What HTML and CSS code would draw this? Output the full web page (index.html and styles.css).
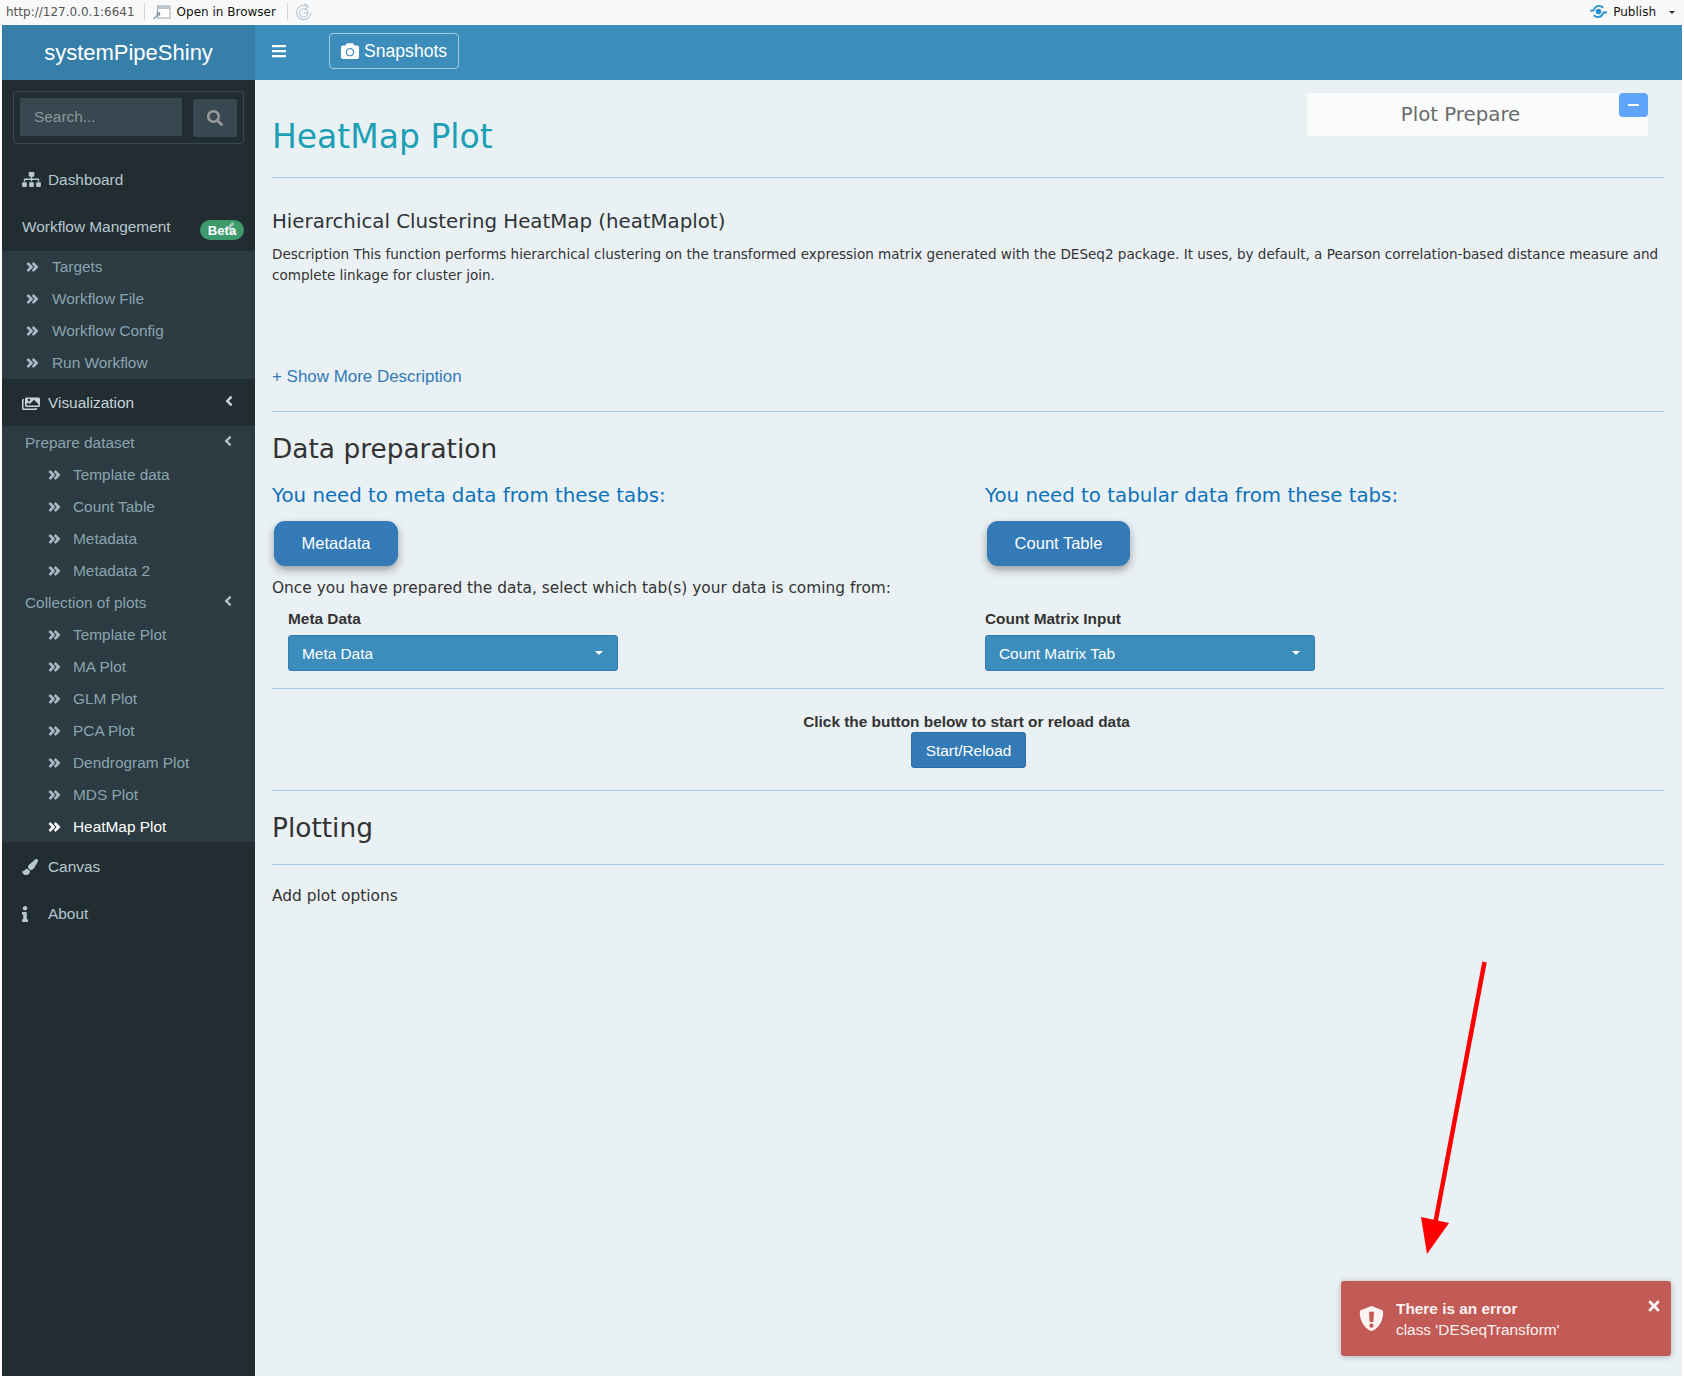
FILE: index.html
```html
<!DOCTYPE html>
<html lang="en">
<head>
<meta charset="utf-8">
<title>systemPipeShiny</title>
<link rel="stylesheet" href="styles.css">
</head>
<body>
<svg class="defs" width="0" height="0" aria-hidden="true">
  <symbol id="i-dbl" viewBox="0 0 448 512"><path d="M224.3 273l-136 136c-9.4 9.4-24.6 9.4-33.9 0l-22.6-22.6c-9.4-9.4-9.4-24.6 0-33.9l96.4-96.4-96.4-96.4c-9.4-9.4-9.4-24.6 0-33.9L54.3 103c9.4-9.4 24.6-9.4 33.9 0l136 136c9.5 9.4 9.5 24.6.1 34zm192-34l-136-136c-9.4-9.4-24.6-9.4-33.9 0l-22.6 22.6c-9.4 9.4-9.4 24.6 0 33.9l96.4 96.4-96.4 96.4c-9.4 9.4-9.4 24.6 0 33.9l22.6 22.6c9.4 9.4 24.6 9.4 33.9 0l136-136c9.4-9.2 9.4-24.4 0-33.8z"/></symbol>
  <symbol id="i-left" viewBox="0 0 256 512"><path d="M31.7 239l136-136c9.4-9.4 24.6-9.4 33.9 0l22.6 22.6c9.4 9.4 9.4 24.6 0 33.9L127.9 256l96.4 96.4c9.4 9.4 9.4 24.6 0 33.9L201.7 409c-9.4 9.4-24.6 9.4-33.9 0l-136-136c-9.5-9.4-9.5-24.6-.1-34z"/></symbol>
  <symbol id="i-search" viewBox="0 0 512 512"><path d="M505 442.7L405.3 343c-4.5-4.5-10.6-7-17-7H372c27.6-35.3 44-79.7 44-128C416 93.1 322.9 0 208 0S0 93.1 0 208s93.1 208 208 208c48.3 0 92.7-16.4 128-44v16.3c0 6.4 2.5 12.5 7 17l99.7 99.7c9.4 9.4 24.6 9.4 33.9 0l28.3-28.3c9.4-9.4 9.4-24.6.1-34zM208 336c-70.7 0-128-57.2-128-128 0-70.7 57.2-128 128-128 70.7 0 128 57.2 128 128 0 70.7-57.2 128-128 128z"/></symbol>
  <symbol id="i-bars" viewBox="0 0 448 512"><path d="M16 132h416c8.837 0 16-7.163 16-16V76c0-8.837-7.163-16-16-16H16C7.163 60 0 67.163 0 76v40c0 8.837 7.163 16 16 16zm0 160h416c8.837 0 16-7.163 16-16v-40c0-8.837-7.163-16-16-16H16c-8.837 0-16 7.163-16 16v40c0 8.837 7.163 16 16 16zm0 160h416c8.837 0 16-7.163 16-16v-40c0-8.837-7.163-16-16-16H16c-8.837 0-16 7.163-16 16v40c0 8.837 7.163 16 16 16z"/></symbol>
  <symbol id="i-camera" viewBox="0 0 512 512"><path d="M512 144v288c0 26.5-21.5 48-48 48H48c-26.5 0-48-21.5-48-48V144c0-26.5 21.5-48 48-48h88l12.3-32.9c7-18.7 24.9-31.1 44.9-31.1h125.5c20 0 37.9 12.4 44.9 31.1L376 96h88c26.5 0 48 21.5 48 48zM376 288c0-66.2-53.8-120-120-120s-120 53.8-120 120 53.8 120 120 120 120-53.8 120-120zm-32 0c0 48.5-39.5 88-88 88s-88-39.5-88-88 39.5-88 88-88 88 39.5 88 88z"/></symbol>
  <symbol id="i-times" viewBox="0 0 352 512"><path d="M242.72 256l100.07-100.07c12.28-12.28 12.28-32.19 0-44.48l-22.24-22.24c-12.28-12.28-32.19-12.28-44.48 0L176 189.28 75.93 89.21c-12.28-12.28-32.19-12.28-44.48 0L9.21 111.45c-12.28 12.28-12.28 32.19 0 44.48L109.28 256 9.21 356.07c-12.28 12.28-12.28 32.19 0 44.48l22.24 22.24c12.28 12.28 32.2 12.28 44.48 0L176 322.72l100.07 100.07c12.28 12.28 32.2 12.28 44.48 0l22.24-22.24c12.28-12.28 12.28-32.19 0-44.48L242.72 256z"/></symbol>
  <symbol id="i-brush" viewBox="0 0 512 512"><path d="M167.02 309.34c-40.12 2.58-76.53 17.86-97.19 72.3-2.35 6.21-8 9.98-14.59 9.98-11.11 0-45.46-27.67-55.25-34.35C0 439.62 37.93 512 128 512c75.86 0 128-43.77 128-120.19 0-3.11-.65-6.08-.97-9.13l-88.01-73.34zM457.89 0c-15.16 0-29.37 6.71-40.21 16.45C213.27 199.05 192 203.34 192 257.09c0 13.7 3.25 26.76 8.73 38.7l63.82 53.18c7.21 1.8 14.64 3.03 22.39 3.03 62.11 0 98.11-45.47 211.16-256.46 7.38-14.35 13.9-29.85 13.9-45.99C512 20.64 486 0 457.89 0z"/></symbol>
  <symbol id="i-info" viewBox="0 0 192 512"><path d="M20 424.229h20V279.771H20c-11.046 0-20-8.954-20-20V212c0-11.046 8.954-20 20-20h112c11.046 0 20 8.954 20 20v212.229h20c11.046 0 20 8.954 20 20V492c0 11.046-8.954 20-20 20H20c-11.046 0-20-8.954-20-20v-47.771c0-11.046 8.954-20 20-20zM96 0C56.235 0 24 32.235 24 72s32.235 72 72 72 72-32.235 72-72S135.764 0 96 0z"/></symbol>
  <symbol id="i-sitemap" viewBox="0 0 640 512"><path d="M128 352H32c-17.7 0-32 14.3-32 32v96c0 17.7 14.3 32 32 32h96c17.7 0 32-14.300 32-32v-96c0-17.700-14.300-32-32-32zm-24-80h192v48h48v-48h192v48h48v-57.600c0-21.200-17.200-38.400-38.400-38.400H344v-64h40c17.700 0 32-14.300 32-32V32c0-17.700-14.300-32-32-32H256c-17.700 0-32 14.300-32 32v96c0 17.700 14.300 32 32 32h40v64H94.400C73.200 224 56 241.200 56 262.400V320h48v-48zm264 80h-96c-17.700 0-32 14.300-32 32v96c0 17.700 14.300 32 32 32h96c17.700 0 32-14.300 32-32v-96c0-17.700-14.300-32-32-32zm240 0h-96c-17.700 0-32 14.300-32 32v96c0 17.700 14.300 32 32 32h96c17.700 0 32-14.300 32-32v-96c0-17.700-14.300-32-32-32z"/></symbol>
  <symbol id="i-images" viewBox="0 0 576 512"><path d="M480 416v16c0 26.500-21.500 48-48 48H48c-26.500 0-48-21.500-48-48V176c0-26.500 21.500-48 48-48h16v48H54c-3.300 0-6 2.700-6 6v244c0 3.300 2.700 6 6 6h372c3.300 0 6-2.700 6-6v-10h48zm48-336H144c-26.500 0-48 21.500-48 48v208c0 26.500 21.500 48 48 48h384c26.500 0 48-21.500 48-48V128c0-26.500-21.500-48-48-48zM222 120c22.100 0 40 17.900 40 40s-17.900 40-40 40-40-17.900-40-40 17.900-40 40-40zm306 218H144v-40l56-56 48 48 136-136 144 144v40z"/></symbol>
  <symbol id="i-shield" viewBox="0 0 512 512"><path fill-rule="evenodd" d="M466 84L274 4a48 48 0 0 0-37 0L46 84C28 91 16 109 16 128c0 198 114 336 221 380 12 5 25 5 37 0C360 473 496 349 496 128c0-19-12-37-30-44zM205 120h102l-12 210h-78zM256 358a44 44 0 1 1 0 88 44 44 0 0 1 0-88z"/></symbol>
</svg>

<div class="window">
  <div class="toolbar">
    <span class="tb-url">http://127.0.0.1:6641</span>
    <span class="tb-sep"></span>
    <svg class="tb-open" viewBox="0 0 18 16"><rect x="5" y="2" width="12.500" height="12" fill="#fff" stroke="#9aa7b4"/><rect x="5" y="2" width="12.500" height="3" fill="#b9c6d2"/><path d="M1 15l6-6M4 9h3v3" fill="none" stroke="#8a97a3" stroke-width="1.300"/></svg>
    <span class="tb-text">Open in Browser</span>
    <span class="tb-sep tb-sep-2"></span>
    <svg class="tb-reload" viewBox="0 0 18 18"><path d="M16 10A7.200 7.200 0 1 1 12.500 3.200M9.500 .8l3.600 2.500-2.800 3.400M13 10H8.500" fill="none" stroke="#b7c5d3" stroke-width="1.100"/><circle cx="8.800" cy="10" r="4.200" fill="none" stroke="#b7c5d3" stroke-width="1.100"/></svg>
    <span class="tb-spacer"></span>
    <svg class="tb-pub" viewBox="0 0 20 16"><path d="M1 7h3.500C6 3.500 8 2 10.500 2c2 0 3.500 1 4.500 2M19 9h-3.500c-1.500 3.500-3.500 5-6 5-2 0-3.500-1-4.500-2" fill="none" stroke="#2a92d0" stroke-width="2"/><circle cx="10" cy="8" r="3" fill="#2a92d0"/></svg>
    <span class="tb-text">Publish</span>
    <span class="tb-caret"></span>
  </div>

  <header class="topbar">
    <div class="logo">systemPipeShiny</div>
    <div class="navbar">
      <svg class="ic bars"><use href="#i-bars"/></svg>
      <button class="snap"><svg class="ic cam"><use href="#i-camera"/></svg><span class="snap-label">Snapshots</span></button>
    </div>
  </header>

  <div class="body">
    <aside class="sidebar">
      <form class="search">
        <input class="search-in" type="text" placeholder="Search...">
        <button class="search-btn" type="button"><svg class="ic"><use href="#i-search"/></svg></button>
      </form>

      <a class="top-item first"><svg class="ic ic-site"><use href="#i-sitemap"/></svg><span>Dashboard</span></a>
      <a class="top-item plain"><span>Workflow Mangement</span><b class="beta">Beta</b><svg class="ic chev chev-beta"><use href="#i-left"/></svg></a>
      <ul class="tree">
        <li class="leaf"><svg class="ic"><use href="#i-dbl"/></svg>Targets</li>
        <li class="leaf"><svg class="ic"><use href="#i-dbl"/></svg>Workflow File</li>
        <li class="leaf"><svg class="ic"><use href="#i-dbl"/></svg>Workflow Config</li>
        <li class="leaf"><svg class="ic"><use href="#i-dbl"/></svg>Run Workflow</li>
      </ul>
      <a class="top-item active"><svg class="ic ic-img"><use href="#i-images"/></svg><span>Visualization</span><svg class="ic chev"><use href="#i-left"/></svg></a>
      <ul class="tree">
        <li class="group">Prepare dataset<svg class="ic chev"><use href="#i-left"/></svg></li>
        <li class="leaf deep"><svg class="ic"><use href="#i-dbl"/></svg>Template data</li>
        <li class="leaf deep"><svg class="ic"><use href="#i-dbl"/></svg>Count Table</li>
        <li class="leaf deep"><svg class="ic"><use href="#i-dbl"/></svg>Metadata</li>
        <li class="leaf deep"><svg class="ic"><use href="#i-dbl"/></svg>Metadata 2</li>
        <li class="group">Collection of plots<svg class="ic chev"><use href="#i-left"/></svg></li>
        <li class="leaf deep"><svg class="ic"><use href="#i-dbl"/></svg>Template Plot</li>
        <li class="leaf deep"><svg class="ic"><use href="#i-dbl"/></svg>MA Plot</li>
        <li class="leaf deep"><svg class="ic"><use href="#i-dbl"/></svg>GLM Plot</li>
        <li class="leaf deep"><svg class="ic"><use href="#i-dbl"/></svg>PCA Plot</li>
        <li class="leaf deep"><svg class="ic"><use href="#i-dbl"/></svg>Dendrogram Plot</li>
        <li class="leaf deep"><svg class="ic"><use href="#i-dbl"/></svg>MDS Plot</li>
        <li class="leaf deep current"><svg class="ic"><use href="#i-dbl"/></svg>HeatMap Plot</li>
      </ul>
      <a class="top-item lower"><svg class="ic ic-brush"><use href="#i-brush"/></svg><span>Canvas</span></a>
      <a class="top-item lower"><svg class="ic ic-info"><use href="#i-info"/></svg><span>About</span></a>
    </aside>

    <main class="content">
      <div class="prep-box">
        <span>Plot Prepare</span>
        <button class="prep-min"><i></i></button>
      </div>

      <h1 class="title">HeatMap Plot</h1>
      <hr class="rule rule-title">
      <h4 class="subtitle">Hierarchical Clustering HeatMap (heatMaplot)</h4>
      <p class="desc">Description This function performs hierarchical clustering on the transformed expression matrix generated with the DESeq2 package. It uses, by default, a Pearson correlation-based distance measure and complete linkage for cluster join.</p>
      <a class="more">+ Show More Description</a>
      <hr class="rule rule-more">
      <h2 class="section first-section">Data preparation</h2>

      <div class="need-grid">
        <div>
          <h3 class="need">You need to meta data from these tabs:</h3>
          <button class="pill pill-meta">Metadata</button>
        </div>
        <div>
          <h3 class="need">You need to tabular data from these tabs:</h3>
          <button class="pill pill-count">Count Table</button>
        </div>
      </div>

      <p class="once">Once you have prepared the data, select which tab(s) your data is coming from:</p>

      <div class="select-grid">
        <div class="field field-a">
          <label>Meta Data</label>
          <div class="select"><span>Meta Data</span><i class="caret"></i></div>
        </div>
        <div class="field">
          <label>Count Matrix Input</label>
          <div class="select"><span>Count Matrix Tab</span><i class="caret"></i></div>
        </div>
      </div>

      <hr class="rule rule-select">
      <div class="reload">
        <strong>Click the button below to start or reload data</strong>
        <button class="start">Start/Reload</button>
      </div>
      <hr class="rule rule-reload">
      <h2 class="section">Plotting</h2>
      <hr class="rule rule-plot">
      <p class="options">Add plot options</p>

      <svg class="arrow" viewBox="0 0 80 310"><path d="M63.500 2L13 270" fill="none" stroke="#ff0000" stroke-width="4.500"/><polygon points="0,257 28,263 6,294" fill="#ff0000"/></svg>

      <div class="toast">
        <svg class="ic toast-shield"><use href="#i-shield"/></svg>
        <div class="toast-text"><strong>There is an error</strong><span>class 'DESeqTransform'</span></div>
        <svg class="ic toast-x"><use href="#i-times"/></svg>
      </div>
    </main>
  </div>
</div>
</body>
</html>
```
FILE: styles.css
```css
* { box-sizing: border-box; }
html, body { margin: 0; padding: 0; height: 100%; overflow: hidden; background: #fff; }
body { font-family: "Liberation Sans", Arial, sans-serif; color: #333; }
.defs { position: absolute; }
.ic { fill: currentColor; display: block; flex: none; }
ul { list-style: none; margin: 0; padding: 0; }
button { font-family: inherit; cursor: pointer; }

.window { height: 1376px; display: flex; flex-direction: column; padding: 0 2px; }

/* toolbar */
.toolbar { height: 25px; margin: 0 -2px; background: #f8f9f8; display: flex; align-items: center; padding: 0 6px 2px 6px; font-family: "DejaVu Sans", sans-serif; font-size: 12px; flex: none; }
.tb-url { color: #555; }
.tb-sep { width: 1px; height: 17px; background: #d4d4d4; margin: 0 7px 0 9px; }
.tb-sep-2 { margin: 0 7px 0 11px; }
.tb-open { width: 19px; height: 16px; margin-right: 6px; }
.tb-text { color: #111; }
.tb-reload { width: 18px; height: 18px; }
.tb-spacer { flex: 1; }
.tb-pub { width: 19px; height: 15px; margin-right: 5px; }
.tb-caret { width: 0; height: 0; border: 3.5px solid transparent; border-top: 3.5px solid #333; border-bottom: 0; margin: 2px 3px 0 13px; }

/* header */
.topbar { height: 55px; display: flex; flex: none; }
.logo { width: 253px; background: #367fa9; color: #fff; font-size: 22px; text-align: center; line-height: 56px; }
.navbar { flex: 1; background: #3c8dbc; display: flex; align-items: center; padding-left: 17px; color: #fff; }
.bars { width: 14px; height: 16px; margin-top: -3px; }
.snap { margin: -3px 0 0 43px; height: 36px; width: 130px; padding: 0 11px; display: flex; align-items: center; gap: 5px; background: transparent; border: 1px solid #a4cbe2; border-radius: 4px; color: #fff; font-size: 17.600px; line-height: 1; }
.snap-label { padding-top: 1px; }
.cam { width: 18px; height: 18px; }

.body { flex: 1; display: flex; min-height: 0; }

/* sidebar */
.sidebar { width: 253px; flex: none; background: #222d32; color: #b8c7ce; font-size: 15.400px; display: flex; flex-direction: column; }
.search { margin: 11px 11px 0; height: 53px; border: 1px solid #374850; border-radius: 3px; padding: 6px; display: flex; justify-content: space-between; }
.search-in { width: 162px; height: 38px; background: #374850; border: 0; padding: 0 14px 1px; color: #ccc; font: 15.400px "Liberation Sans", sans-serif; }
.search-in::placeholder { color: #8c979c; opacity: 1; }
.search-btn { width: 44px; height: 38px; margin-top: 1px; background: #374850; border: 0; border-radius: 2px; color: #999; padding: 0; display: flex; align-items: center; justify-content: center; }
.search-btn .ic { width: 16px; height: 16px; }

.top-item { height: 47px; display: flex; align-items: center; padding-left: 20px; position: relative; }
.top-item.first { margin-top: 13px; padding-bottom: 2px; }
.top-item.plain { padding-bottom: 1px; }
.top-item.lower { padding-top: 2px; }
.top-item.active { color: #c6d3d9; }
.top-item .ic, .top-item span { flex: none; }
.ic-site { width: 19px; height: 15px; margin-right: 7px; }
.ic-img { width: 18px; height: 16px; margin-right: 8px; }
.ic-brush { width: 16px; height: 16px; margin-right: 10px; }
.ic-info { width: 6px; height: 16px; margin-right: 20px; }
.chev { position: absolute; right: 22px; top: 50%; width: 8px; height: 16px; margin-top: -10px; }
.top-item .chev-beta { color: #d5dedb; opacity: .7; right: 20px; top: 15px; width: 9px; height: 18px; margin-top: 0; }
.beta { position: absolute; right: 11px; top: 16px; width: 44px; height: 20px; border-radius: 10px; background: #3c9a6d; color: #fff; font-size: 13.200px; line-height: 21px; text-align: center; }

.tree { background: #2c3b41; color: #8aa4af; }
.leaf, .group { height: 32px; display: flex; align-items: center; position: relative; }
.leaf { padding-left: 24px; }
.leaf .ic { width: 13px; height: 14px; margin-right: 13px; color: #a9bcc5; stroke: currentColor; stroke-width: 26; }
.leaf.deep { padding: 2px 0 0 46px; }
.leaf.deep .ic { margin-right: 12px; }
.group { padding: 2px 0 0 23px; }
.group .chev { right: 23px; color: #a9bcc5; margin-top: -9px; }
.current { color: #fff; }
.current .ic { color: #fff; }

/* content */
.content { flex: 1; background: #eaf1f4; padding: 0 18px 0 17px; position: relative; min-width: 0; }
.content h1, .content h2, .content h3, .content h4, .content p { font-weight: 400; margin: 0; font-family: "DejaVu Sans", sans-serif; }
.title { font-size: 33px; line-height: 40px; color: #1ca0b6; padding-top: 37px; }
.rule { border: 0; height: 1px; background: #a8cbe3; margin: 0; }
.rule-title { margin-top: 20px; }
.content .subtitle { font-size: 19.800px; line-height: 24px; margin-top: 32px; color: #2e3436; }
.content .desc { font-size: 13.550px; line-height: 21px; margin-top: 10px; color: #333; }
.more { display: block; font-size: 16.940px; line-height: 22px; color: #337ab7; margin-top: 80px; }
.rule-more { margin-top: 23px; }
.section { font-size: 26.400px; line-height: 34px; color: #333; }
.content .first-section { margin-top: 20px; }
.need-grid { display: grid; grid-template-columns: 713px 1fr; margin-top: 18px; }
.content .need { font-size: 19.800px; line-height: 24px; color: #0c72bb; }
.pill { display: block; margin: 13px 0 0 2px; height: 45px; background: #337ab7; border: 0; border-radius: 11px; color: #fff; font-size: 16.500px; box-shadow: 0 4px 8px rgba(0,0,0,.35); }
.pill-meta { width: 124px; }
.pill-count { width: 143px; }
.content .once { font-size: 15.400px; line-height: 22px; margin-top: 11px; }
.select-grid { display: grid; grid-template-columns: 713px 1fr; margin-top: 9px; }
.field-a { padding-left: 16px; }
.field label { display: block; font-weight: 700; font-size: 15.400px; line-height: 22px; }
.select { width: 330px; height: 36px; margin-top: 5px; background: #3c8dbc; border: 1px solid #337ab7; border-radius: 3px; color: #fff; font-size: 15.400px; display: flex; align-items: center; justify-content: space-between; padding: 1px 13px 0; }
.caret { width: 0; height: 0; border: 4.500px solid transparent; border-top: 4.500px solid #fff; border-bottom: 0; margin: -1px 1px 0 0; }
.rule-select { margin-top: 17px; }
.reload { display: flex; flex-direction: column; align-items: center; margin-top: 23px; padding-right: 1px; font-size: 15.400px; line-height: 20px; }
.reload strong { color: #333; margin-left: -2px; }
.start { width: 115px; height: 36px; margin: 0 0 0 2px; background: #337ab7; border: 1px solid #2e6da4; border-radius: 3px; color: #fff; font-size: 15.400px; padding: 1px 0 0; }
.rule-reload { margin-top: 22px; }
.content .rule-reload + .section { margin-top: 20px; }
.rule-plot { margin-top: 19px; }
.content .options { font-size: 15.400px; line-height: 22px; margin-top: 20px; }

/* overlays */
.prep-box { position: absolute; left: 1052px; top: 13px; width: 341px; height: 43px; background: #fafbfb; color: #6b6b6b; font-family: "DejaVu Sans", sans-serif; font-size: 19.800px; display: flex; align-items: center; justify-content: center; padding: 0 34px 0 0; }
.prep-min { position: absolute; right: 0; top: 0; width: 29px; height: 24px; background: #5fa4f8; border: 0; border-radius: 4px; padding: 0; display: flex; align-items: center; justify-content: center; }
.prep-min i { display: block; width: 11px; height: 2px; background: #fff; margin-top: -1px; }
.arrow { position: absolute; left: 1165.500px; top: 880px; width: 80px; height: 310px; }
.toast { position: absolute; left: 1086px; top: 1201px; width: 330px; height: 75px; background: #c25a55; border-radius: 3px; box-shadow: 0 1px 6px rgba(0,0,0,.25); color: #fdf3f2; display: flex; align-items: center; }
.toast-shield { width: 25px; height: 27px; margin-left: 18px; }
.toast-text { margin-left: 12px; font-size: 15.400px; line-height: 21px; display: flex; flex-direction: column; }
.toast-x { position: absolute; right: 11px; top: 17px; width: 12px; height: 16px; }
```
